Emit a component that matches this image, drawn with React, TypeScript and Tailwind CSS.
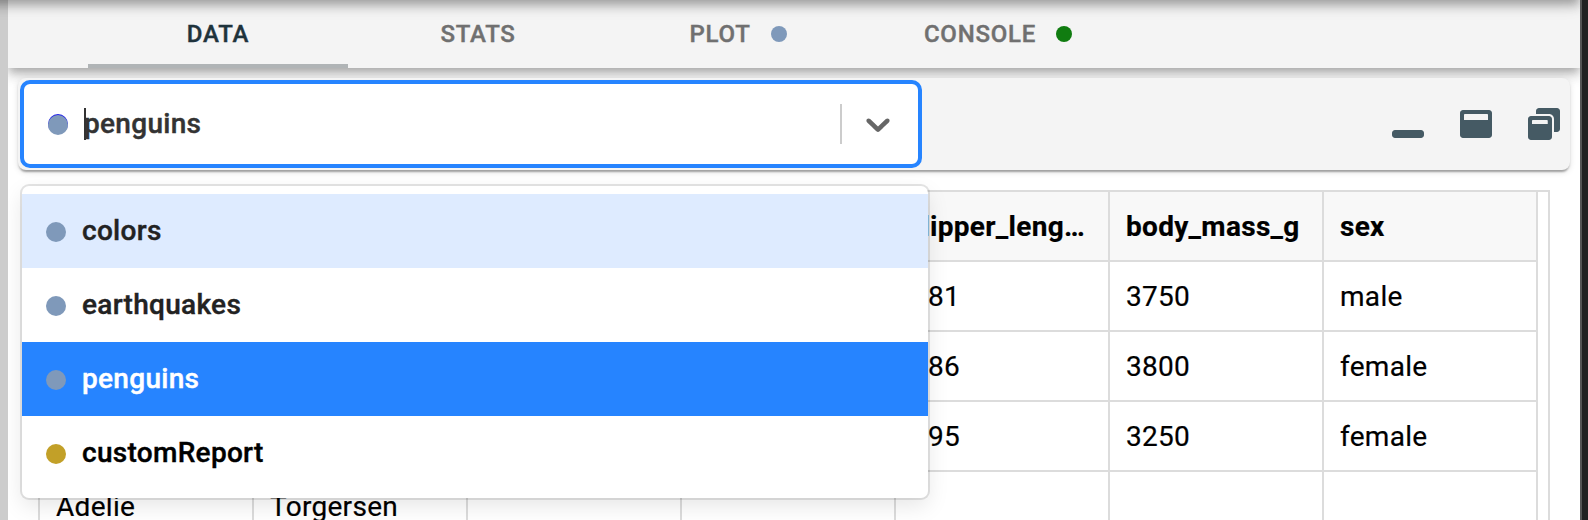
import React from "react";
import { FaWindowMaximize, FaWindowMinimize, FaWindowRestore } from "react-icons/fa";

const tabs = [
  { label: "DATA", active: true, dot: "" },
  { label: "STATS", active: false, dot: "" },
  { label: "PLOT", active: false, dot: "bg-[#7f99ba]" },
  { label: "CONSOLE", active: false, dot: "bg-[#107c10]" },
];

const options = [
  { label: "colors", row: "bg-[#deebff] text-[#222]", dot: "bg-[#7f99ba]" },
  { label: "earthquakes", row: "text-[#222]", dot: "bg-[#7f99ba]" },
  { label: "penguins", row: "bg-[#2684ff] text-white", dot: "bg-[#7f99ba]" },
  { label: "customReport", row: "text-black", dot: "bg-[#c2a028]" },
];

const columns = ["species", "island", "bill_length_mm", "bill_depth_mm", "flipper_length_mm", "body_mass_g", "sex"];

const rows = [
  ["Adelie", "Torgersen", "39.1", "18.7", "181", "3750", "male"],
  ["Adelie", "Torgersen", "39.5", "17.4", "186", "3800", "female"],
  ["Adelie", "Torgersen", "40.3", "18", "195", "3250", "female"],
  ["Adelie", "Torgersen", "", "", "", "", ""],
];

function Tabs() {
  return (
    <nav className="relative z-10 flex h-[68px] shrink-0 bg-[#f4f4f4] pl-20 shadow-[0_4px_8px_-2px_rgba(0,0,0,0.2),0_8px_10px_0_rgba(0,0,0,0.14),0_2px_20px_0_rgba(0,0,0,0.12)]">
      {tabs.map((t) => (
        <div
          key={t.label}
          className={`flex w-[260px] items-center justify-center border-b-4 text-[24px] leading-none font-medium tracking-[0.75px] [-webkit-text-stroke:0.4px] ${
            t.active ? "border-[#b0b4b6] text-[#1f333c]" : "border-transparent text-[#707070]"
          }`}
        >
          <span className="pt-1">{t.label}</span>
          {t.dot && <span className={`mt-1 ml-5 size-4 rounded-full ${t.dot}`} />}
        </div>
      ))}
    </nav>
  );
}

function Menu() {
  return (
    <ul className="absolute top-[108px] left-1 z-30 h-[312px] w-[906px] rounded-[7px] bg-white py-2 shadow-[0_0_0_2px_rgba(0,0,0,0.1),0_8px_22px_0_rgba(0,0,0,0.1)]">
      {options.map((o) => (
        <li key={o.label} className={`flex h-[74px] items-center pl-6 text-[28px] leading-none font-medium [-webkit-text-stroke:0.4px] ${o.row}`}>
          <span className={`mt-[2px] mr-4 size-5 rounded-full ${o.dot}`} />
          <span>{o.label}</span>
        </li>
      ))}
    </ul>
  );
}

function Toolbar() {
  return (
    <div className="relative z-20 mt-[10px] mr-[10px] ml-[10px] flex h-[92px] shrink-0 items-center rounded-lg bg-[#f4f4f4] pr-[10px] pl-[2px] shadow-[0_4px_2px_-2px_rgba(0,0,0,0.2),0_2px_2px_0_rgba(0,0,0,0.14),0_2px_6px_0_rgba(0,0,0,0.12)]">
      <div className="flex h-[88px] w-[902px] items-center rounded-[10px] border-4 border-[#2684ff] bg-white pl-6 text-[28px] leading-none font-medium text-[#333]">
        <span className="mt-[2px] size-5 rounded-full bg-[#7f99ba] shadow-[0_-1px_0_0_#2222e8]" />
        <span className="ml-4 h-8 w-[2px] bg-[#333]" />
        <span className="-ml-[2px] flex-1 [-webkit-text-stroke:0.4px]">penguins</span>
        <span className="h-10 w-[2px] bg-[#ccc]" />
        <svg viewBox="0 0 20 20" className="mr-5 ml-4 size-10 fill-[#666]">
          <path d="M4.516 7.548c0.436-0.446 1.043-0.481 1.576 0l3.908 3.747 3.908-3.747c0.533-0.481 1.141-0.446 1.574 0 0.436 0.445 0.408 1.197 0 1.615-0.406 0.418-4.695 4.502-4.695 4.502-0.217 0.223-0.502 0.335-0.787 0.335s-0.57-0.112-0.789-0.335c0 0-4.287-4.084-4.695-4.502s-0.436-1.17 0-1.615z" />
        </svg>
      </div>
      <div className="ml-auto flex gap-9 text-[32px] text-[#455a64]">
        <FaWindowMinimize />
        <FaWindowMaximize />
        <FaWindowRestore />
      </div>
      <Menu />
    </div>
  );
}

function Table() {
  return (
    <div className="mt-5 mr-[30px] ml-[30px] flex-1 border-2 border-b-0 border-[#dcdcdc] text-[28px] leading-none text-black [-webkit-text-stroke:0.2px]">
      <div className="flex w-[1498px] bg-[#f8f8f8] font-bold">
        {columns.map((c) => (
          <div key={c} className="h-[70px] w-[214px] shrink-0 border-r-2 border-b-2 border-[#dcdcdc] px-4">
            <div className="truncate leading-[70px]">{c}</div>
          </div>
        ))}
      </div>
      {rows.map((r, i) => (
        <div key={i} className="flex w-[1498px]">
          {r.map((v, j) => (
            <div key={j} className="h-[70px] w-[214px] shrink-0 truncate border-r-2 border-b-2 border-[#dcdcdc] px-4 leading-[70px]">
              {v}
            </div>
          ))}
        </div>
      ))}
    </div>
  );
}

export default function App() {
  return (
    <div className="relative flex h-[520px] w-[1588px] overflow-hidden bg-white font-[Roboto,sans-serif] tracking-[0.3px]">
      <div className="w-2 shrink-0 bg-[#ccc]" />
      <main className="relative flex w-[1572px] shrink-0 flex-col overflow-hidden">
        <Tabs />
        <Toolbar />
        <Table />
      </main>
      <div className="z-40 w-2 shrink-0 border-l-2 border-[#555] bg-[#222]" />
      <div className="absolute -top-5 -left-10 z-30 h-5 w-[1620px] shadow-[0_4px_8px_-2px_rgba(0,0,0,0.2),0_8px_10px_0_rgba(0,0,0,0.14),0_2px_20px_0_rgba(0,0,0,0.12)]" />
    </div>
  );
}
